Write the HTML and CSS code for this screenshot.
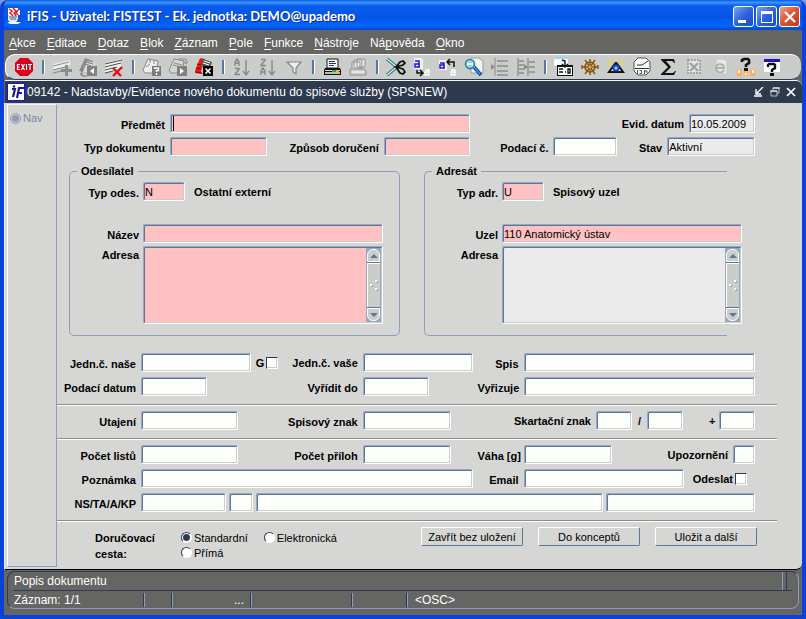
FILE: index.html
```html
<!DOCTYPE html>
<html lang="cs">
<head>
    <meta charset="UTF-8">
    <meta name="viewport" content="width=device-width, initial-scale=1.0">
    <title>iFIS</title>
    <link rel="stylesheet" href="styles.css">
</head>
<body>
    <div class="window">
        <header class="titlebar">
            <svg class="app-icon" width="16" height="18" viewBox="0 0 16 18">
                <path d="M2 1h10v2h2v5h-2v3H4L2 8z" fill="#fff"/>
                <path d="M3 2l3 2-2 2 3 3M7 1l3 3-2 2 2 3M12 3l-2 3 2 2" stroke="#d8232f" stroke-width="1.5" fill="none"/>
                <path d="M2 9h10v4l-2 2H4l-2-2z" fill="#e8ecf8"/>
                <path d="M3 10h8M4 12h6M12 10h2v3h-3" stroke="#34509c" fill="none"/>
                <path d="M1 15h14l-3 2H4z" fill="#fff"/>
            </svg>
            <h1>iFIS - Uživatel: FISTEST - Ek. jednotka: DEMO@upademo</h1>
            <div class="window-buttons">
                <button type="button" class="window-button" aria-label="Minimalizovat">
                    <svg width="20" height="20" viewBox="0 0 20 20"><path d="M4 13h8v3H4z" fill="#fff"/></svg>
                </button>
                <button type="button" class="window-button" aria-label="Maximalizovat">
                    <svg width="20" height="20" viewBox="0 0 20 20"><path d="M4 4h12v12H4zM5 7v8h10V7z" fill="#fff" fill-rule="evenodd"/></svg>
                </button>
                <button type="button" class="window-button close" aria-label="Zavřít">
                    <svg width="20" height="20" viewBox="0 0 20 20"><path d="M5 5l10 10M15 5L5 15" stroke="#fff" stroke-width="2.4"/></svg>
                </button>
            </div>
        </header>

        <nav class="menu">
            <button type="button"><u>A</u>kce</button>
            <button type="button"><u>E</u>ditace</button>
            <button type="button"><u>D</u>otaz</button>
            <button type="button"><u>B</u>lok</button>
            <button type="button"><u>Z</u>áznam</button>
            <button type="button"><u>P</u>ole</button>
            <button type="button"><u>F</u>unkce</button>
            <button type="button"><u>N</u>ástroje</button>
            <button type="button">Ná<u>p</u>ověda</button>
            <button type="button"><u>O</u>kno</button>
        </nav>

        <div class="toolbar">
            <button type="button" aria-label="Konec">
                <svg viewBox="0 0 20 20"><path d="M6 1h8l5 5v8l-5 5H6l-5-5V6z" fill="#d9001b"/><path d="M6 7.500H3.500v5H6M3 10h2.500M7.500 7l3 6M10.500 7l-3 6M12.500 7v6M14 7.500h4M16 7v6" stroke="#fff" stroke-width="1.200" fill="none"/></svg>
            </button>
            <span class="separator"></span>
            <button type="button" aria-label="Vložit záznam">
                <svg viewBox="0 0 20 20"><path d="M1 7l17-4v5L1 13z" fill="#efefef"/><path d="M1 9l16-4M1 13l12-3M1 16l9-2" stroke="#8b8b8b" fill="none"/><path d="M13 8h3v4h4v3h-4v4h-3v-4h-4v-3h4z" fill="#8d8d8d"/></svg>
            </button>
            <button type="button" aria-label="Předchozí záznam">
                <svg viewBox="0 0 20 20"><path d="M1 14L7 1l8 3-3 12z" fill="#8d8d8d"/><path d="M9 4l8 2-3 9H5z" fill="#d9d9d9"/><path d="M8 5l7 2M7 7l6 2M4 12v7M2 16l2 3h5" stroke="#777" fill="none"/><path d="M9 9h10v10H9z" fill="#818181"/><path d="M16 11v6l-4-3z" fill="#fff"/></svg>
            </button>
            <button type="button" aria-label="Smazat záznam">
                <svg viewBox="0 0 20 20"><path d="M1 6l16-4v9L1 16z" fill="#f3f3f3"/><path d="M1 7l17-4M1 10l16-4M1 13l12-3M1 16l8-2" stroke="#4a4a4a" fill="none"/><path d="M9 11l8 8M18 10l-9 9" stroke="#e01010" stroke-width="2.400"/></svg>
            </button>
            <span class="separator"></span>
            <button type="button" aria-label="Zadat dotaz">
                <svg viewBox="0 0 20 20"><path d="M1 13L6 2l10 2-2 12H3z" fill="#eee" stroke="#888"/><path d="M8 2v4M12 3v4M4 10l4-3" stroke="#888" fill="none"/><path d="M10 9h9v10h-9z" fill="#7b7b7b"/><path d="M12.500 12v-1h4v2.500h-2V15M14.500 16v2" stroke="#fff" stroke-width="1.400" fill="none"/></svg>
            </button>
            <button type="button" aria-label="Provést dotaz">
                <svg viewBox="0 0 20 20"><path d="M1 13L6 2l10 2-2 12H3z" fill="#d5d5d5" stroke="#888"/><path d="M6 6l8 2M5 8l8 2M10 2h8v3M15 4l3 3 2-3" stroke="#888" fill="none"/><path d="M9 9h10v10H9z" fill="#818181"/><path d="M12 11v6l4-3z" fill="#fff"/></svg>
            </button>
            <button type="button" aria-label="Zrušit dotaz">
                <svg viewBox="0 0 20 20"><path d="M1 14L6 1l5 1-4 12 2 3-8-1z" fill="#e41b17"/><path d="M9 2l9 3-2 6-9-2z" fill="#555"/><path d="M10 4l6 2M9 6l6 2" stroke="#fff"/><path d="M3 7l4 1M2 11l5 1M2 15l5 1" stroke="#8a0000"/><path d="M9 9h10v10H9z" fill="#000"/><path d="M11.500 11.500l5 5M16.500 11.500l-5 5" stroke="#fff" stroke-width="1.600"/></svg>
            </button>
            <span class="separator"></span>
            <button type="button" aria-label="Seřadit vzestupně">
                <svg viewBox="0 0 20 20"><path d="M3 9V5l2-3 2 3v4M3 6h4M3 11.500h4v1L3 17v.500h5M14 3v14M11 14l3 4 3-4" stroke="#858585" stroke-width="1.300" fill="none"/></svg>
            </button>
            <button type="button" aria-label="Seřadit sestupně">
                <svg viewBox="0 0 20 20"><path d="M3 2.500h4v1L3 8v.500h5M3 18v-4l2-3 2 3v4M3 15h4M14 3v14M11 14l3 4 3-4" stroke="#858585" stroke-width="1.300" fill="none"/></svg>
            </button>
            <button type="button" aria-label="Filtr">
                <svg viewBox="0 0 20 20"><path d="M3 5h14l-5 6v6l-3-2v-4z" fill="#ededed" stroke="#858585" stroke-width="1.200"/></svg>
            </button>
            <span class="separator"></span>
            <button type="button" aria-label="Tisk">
                <svg viewBox="0 0 20 20"><path d="M5 2h11v9H5z" fill="#fff" stroke="#111"/><path d="M7 4.500h6M7 6.500h7M7 8.500h5" stroke="#1b3196"/><path d="M3 11h15l1 2v5H2v-5z" fill="#111"/><path d="M3 13h15v1H3z" fill="#ddd"/><path d="M3 15h15v2H3z" fill="#bbb"/><path d="M10 13h4v2h-4z" fill="#23b52b"/><path d="M14 13h3v2h-3z" fill="#e9c600"/></svg>
            </button>
            <button type="button" aria-label="Tisk všeho">
                <svg viewBox="0 0 20 20"><path d="M9 2h8v8H9zM6 3h8v8H6zM4 5h8v8H4z" fill="#eee" stroke="#909090"/><path d="M2 12h14l2 2v4H2z" fill="#ccc" stroke="#909090"/><path d="M4 15h12" stroke="#fff"/></svg>
            </button>
            <span class="separator"></span>
            <button type="button" aria-label="Vyjmout">
                <svg viewBox="0 0 20 20"><path d="M1 2l11 9M1 18l11-9" stroke="#33656d" stroke-width="3.200"/><path d="M1 2l11 9M1 18l11-9" stroke="#c8f4f4" stroke-width="1.500"/><path d="M10 10l4-5 3-1 2 2-2 2-7 2 7 2 2 3-2 2-3-1z" stroke="#111" stroke-width="1.800" fill="none"/></svg>
            </button>
            <button type="button" aria-label="Kopírovat">
                <svg viewBox="0 0 20 20"><path d="M2 1h7l2 2v9H2z" fill="#f4f4f4"/><path d="M3 4h4v6H3V7h4M7 10h1" stroke="#1717d8" stroke-width="1.500" fill="none"/><path d="M5 13v3h6M8 13l3 3-3 3" stroke="#111" stroke-width="1.500" fill="none"/><path d="M13 13h4v5h-4v-3h4" stroke="#fff" stroke-width="1.300" fill="none"/></svg>
            </button>
            <button type="button" aria-label="Vložit">
                <svg viewBox="0 0 20 20"><path d="M1 3h7l1 2v8H1z" fill="#f4f4f4"/><path d="M2 6h4v5H2V8h4M6 11h1" stroke="#1717d8" stroke-width="1.500" fill="none"/><path d="M10 5h6v5M12 2L9 5l3 3" stroke="#111" stroke-width="1.500" fill="none"/><path d="M13 13h4v5h-4v-3h4" stroke="#fff" stroke-width="1.300" fill="none"/></svg>
            </button>
            <button type="button" aria-label="Upravit">
                <svg viewBox="0 0 20 20"><path d="M7 1h8l4 3v12H7z" fill="#f4f4ee" stroke="#999"/><circle cx="6" cy="7" r="4.500" fill="#8fdce8" stroke="#297f99" stroke-width="1.500"/><path d="M3 7h6" stroke="#fff" stroke-width="2"/><path d="M10 10l7 8" stroke="#1452b8" stroke-width="3.500"/><path d="M10 10l6 7" stroke="#55c7ee"/></svg>
            </button>
            <button type="button" aria-label="Seznam hodnot">
                <svg viewBox="0 0 20 20"><path d="M5 1v18" stroke="#8a8a8a"/><path d="M1 7l4 3-4 3z" fill="#8a8a8a"/><path d="M7 4h11M7 9h11M7 14h11M7 18h11" stroke="#8a8a8a" stroke-width="1.500"/></svg>
            </button>
            <button type="button" aria-label="Strom">
                <svg viewBox="0 0 20 20"><path d="M2 1v18M12 1v18" stroke="#8a8a8a" stroke-width="1.300"/><path d="M3 4h5M3 8h5M3 12h5M3 16h5M13 5h6M13 10h6M13 15h6" stroke="#8a8a8a" stroke-width="1.500"/><path d="M8 7l4 3-4 3z" fill="#8a8a8a"/></svg>
            </button>
            <span class="separator"></span>
            <button type="button" aria-label="Detail">
                <svg viewBox="0 0 20 20"><path d="M0 1h14v8H0z" fill="#f4fbff"/><path d="M0 1h14" stroke="#9cd5f5" stroke-width="2"/><path d="M3 8h16v11H3z" fill="#111"/><path d="M4 10h14v8H4z" fill="#fff"/><path d="M5 12h4M5 15h4M11 15h1M14 12h2v4h-2zM8 3l3 1v5M8 7l3 3 3-3" stroke="#111" stroke-width="1.400" fill="none"/></svg>
            </button>
            <button type="button" aria-label="Navigátor">
                <svg viewBox="0 0 20 20"><circle cx="10" cy="10" r="5" fill="none" stroke="#8b5508" stroke-width="1.600"/><path d="M2 10h16M10 2v16M5 3l10 14M15 3L5 17M2 8v4M18 8v4" stroke="#8b5508" stroke-width="1.400"/><circle cx="10" cy="10" r="1.500" fill="#dfb15c"/></svg>
            </button>
            <button type="button" aria-label="Zobrazit">
                <svg viewBox="0 0 20 20"><path d="M2 5l3 3M6 2l1 3M14 2l-1 3M18 5l-3 3" stroke="#eadf21" stroke-width="1.500"/><path d="M1 16L9 5h2l8 11z" fill="#111"/><path d="M5 14l4-5h2l4 5z" fill="#f4f4f4"/><circle cx="10" cy="11" r="3.500" fill="#1d45d6"/><circle cx="10" cy="11" r="1.500" fill="#6eeaf7"/></svg>
            </button>
            <button type="button" aria-label="Kalendář">
                <svg viewBox="0 0 20 20"><path d="M6 1h8l4 4v9l-4 4H6l-4-4V5z" fill="#fafafa" stroke="#555"/><path d="M5 8h5l6-4M3 11.500h14" stroke="#333" fill="none"/><path d="M5.500 13v4M7.500 13.500h2v3h-2M12.500 13v4M14 13v2h2" stroke="#555" fill="none"/></svg>
            </button>
            <button type="button" aria-label="Součet">
                <svg viewBox="0 0 20 20"><path d="M3 2h13l1 4h-1c-1-2-2-2-3-2H8l5 6-6 6h7c2 0 2-1 3-2h1l-2 4H3v-1l7-7-7-7z" fill="#111"/></svg>
            </button>
            <button type="button" aria-label="Export do Excelu">
                <svg viewBox="0 0 20 20"><path d="M4 3h12v13H4z" fill="#e3e3e3" stroke="#a5a5a5" stroke-width="2" stroke-dasharray="2 1"/><path d="M6 6l8 8M14 6l-8 8" stroke="#a0a0a0" stroke-width="2"/></svg>
            </button>
            <button type="button" aria-label="Export do prohlížeče">
                <svg viewBox="0 0 20 20"><path d="M6 2h8l3 3v12H6z" fill="#e8e8e8" stroke="#c4c4c4"/><path d="M14 13c-2 4-8 3-8-2s8-5 8 0H6" fill="none" stroke="#b0b0b0" stroke-width="2"/></svg>
            </button>
            <button type="button" aria-label="Kontextová nápověda">
                <svg viewBox="0 0 20 20"><path d="M1 12h5v7H1zM8 14h4v5H8zM14 12h5v7h-5z" fill="#f6b45c"/><path d="M2 13h2v3H2zM9 16h2v2H9zM16 13h2v3h-2z" fill="#fff0cf"/><path d="M6 5V3l2-1h4l1 1v3l-3 2v2" stroke="#111" stroke-width="2.600" fill="none"/><path d="M8 11h4v3H8z" fill="#111"/></svg>
            </button>
            <button type="button" aria-label="Nápověda">
                <svg viewBox="0 0 20 20"><path d="M2 3h16v12H2z" fill="#fff"/><path d="M2 2h16v3H2z" fill="#2411c8"/><path d="M6 10V8l1-1h5l1 1v3l-3 2v2" stroke="#111" stroke-width="2.400" fill="none"/><path d="M8 16h4v3H8z" fill="#111"/></svg>
            </button>
        </div>

        <div class="form-title">
            <svg width="18" height="18" viewBox="0 0 18 18">
                <path d="M0 0h18v18H0z" fill="#1414f0"/>
                <path d="M1 1h16v16H1z" fill="#fff"/>
                <path d="M6 4l2-1M5 6h3L6 14M10 15l2-10h5M10 10h5" stroke="#1a1a8c" stroke-width="2.200" fill="none"/>
            </svg>
            <h2>09142 - Nadstavby/Evidence nového dokumentu do spisové služby (SPSNEW)</h2>
            <div class="form-buttons">
                <button type="button" aria-label="Minimalizovat formulář">
                    <svg width="10" height="10" viewBox="0 0 10 10"><path d="M9 0L3 6M2 2v5h5M0 9h8" stroke="#fff" stroke-width="1.400" fill="none"/></svg>
                </button>
                <button type="button" aria-label="Obnovit formulář">
                    <svg width="10" height="10" viewBox="0 0 10 10"><path d="M3 3V1h6v5H7M1 4h6v5H1z" stroke="#b9bfca" fill="none"/><path d="M3 1h7M0 4h7" stroke="#fff"/></svg>
                </button>
                <button type="button" aria-label="Zavřít formulář">
                    <svg width="10" height="10" viewBox="0 0 10 10"><path d="M1 1l8 8M9 1L1 9" stroke="#fff" stroke-width="1.700"/></svg>
                </button>
            </div>
        </div>

        <main class="workspace">
            <aside class="nav-panel">
                <label><input type="radio" name="nav" class="nav-radio" disabled> Nav</label>
            </aside>

            <form class="form">
                <div class="head-grid">
                    <label for="predmet">Předmět</label>
                    <input type="text" id="predmet" class="required current span-3">
                    <div class="cell-end head-date">
                        <label for="datum">Evid. datum</label>
                        <input type="text" id="datum" class="w-date" value="10.05.2009" readonly>
                    </div>
                    <label for="typ">Typ dokumentu</label>
                    <input type="text" id="typ" class="required">
                    <label for="zpusob">Způsob doručení</label>
                    <input type="text" id="zpusob" class="required">
                    <label for="podaci">Podací č.</label>
                    <input type="text" id="podaci">
                    <label for="stav">Stav</label>
                    <input type="text" id="stav" value="Aktivní" readonly>
                </div>

                <div class="groups">
                    <fieldset class="group">
                        <legend>Odesílatel</legend>
                        <div class="group-grid">
                            <label for="typ-odes">Typ odes.</label>
                            <div class="cell">
                                <input type="text" id="typ-odes" class="required w-type" value="N">
                                <output>Ostatní externí</output>
                            </div>
                            <label for="nazev" class="gap-before">Název</label>
                            <input type="text" id="nazev" class="required gap-before">
                            <label for="adresa-odes" class="top">Adresa</label>
                            <div class="area required">
                                <textarea id="adresa-odes"></textarea>
                                <div class="scrollbar">
                                    <button type="button" class="up" aria-label="Nahoru"></button>
                                    <span class="thumb"><svg width="8" height="12" viewBox="0 0 8 12"><path d="M5 1h2v2H5zM0 5h2v2H0zM5 9h2v2H5z" fill="#fff"/><path d="M7 2h1v2H6V3h1zM2 6h1v2H1V7h1zM7 10h1v2H6v-1h1z" fill="#9aa7bb"/></svg></span>
                                    <button type="button" class="down" aria-label="Dolů"></button>
                                </div>
                            </div>
                        </div>
                    </fieldset>

                    <fieldset class="group open">
                        <legend>Adresát</legend>
                        <div class="group-grid">
                            <label for="typ-adr">Typ adr.</label>
                            <div class="cell">
                                <input type="text" id="typ-adr" class="required w-type" value="U">
                                <output>Spisový uzel</output>
                            </div>
                            <label for="uzel" class="gap-before">Uzel</label>
                            <input type="text" id="uzel" class="required gap-before" value="110 Anatomický ústav">
                            <label for="adresa-adr" class="top">Adresa</label>
                            <div class="area">
                                <textarea id="adresa-adr" readonly></textarea>
                                <div class="scrollbar">
                                    <button type="button" class="up" aria-label="Nahoru"></button>
                                    <span class="thumb"><svg width="8" height="12" viewBox="0 0 8 12"><path d="M5 1h2v2H5zM0 5h2v2H0zM5 9h2v2H5z" fill="#fff"/><path d="M7 2h1v2H6V3h1zM2 6h1v2H1V7h1zM7 10h1v2H6v-1h1z" fill="#9aa7bb"/></svg></span>
                                    <button type="button" class="down" aria-label="Dolů"></button>
                                </div>
                            </div>
                        </div>
                    </fieldset>
                </div>

                <div class="detail-grid">
                    <label for="nase">Jedn.č. naše</label>
                    <input type="text" id="nase">
                    <div class="cell-between">
                        <label>G<input type="checkbox"></label>
                        <label for="vase">Jedn.č. vaše</label>
                    </div>
                    <input type="text" id="vase">
                    <label for="spis">Spis</label>
                    <input type="text" id="spis">

                    <label for="podaci-datum">Podací datum</label>
                    <input type="text" id="podaci-datum" class="w-date">
                    <label for="vyridit">Vyřídit do</label>
                    <input type="text" id="vyridit" class="w-date">
                    <label for="vyrizuje">Vyřizuje</label>
                    <input type="text" id="vyrizuje">
                </div>

                <hr>

                <div class="detail-grid">
                    <label for="utajeni">Utajení</label>
                    <input type="text" id="utajeni" class="w-code">
                    <label for="znak">Spisový znak</label>
                    <input type="text" id="znak" class="w-number">
                    <div class="cell-end span-2 shredding">
                        <label for="skart">Skartační znak</label>
                        <input type="text" id="skart" class="w-short">
                        <span class="mark">/</span>
                        <input type="text" class="w-short" aria-label="Skartační lhůta">
                        <span class="mark plus">+</span>
                        <input type="text" class="w-short" aria-label="Prodloužení">
                    </div>
                </div>

                <hr>

                <div class="detail-grid">
                    <label for="listu">Počet listů</label>
                    <input type="text" id="listu" class="w-code">
                    <label for="priloh">Počet příloh</label>
                    <input type="text" id="priloh" class="w-number">
                    <label for="vaha">Váha [g]</label>
                    <div class="cell-between">
                        <input type="text" id="vaha" class="w-number">
                        <span class="cell-end">
                            <label for="upozorneni">Upozornění</label>
                            <input type="text" id="upozorneni" class="w-flag">
                        </span>
                    </div>

                    <label for="poznamka">Poznámka</label>
                    <input type="text" id="poznamka" class="span-3">
                    <label for="email">Email</label>
                    <div class="cell-between send">
                        <input type="text" id="email" class="grow">
                        <label>Odeslat<input type="checkbox"></label>
                    </div>

                    <label for="ns">NS/TA/A/KP</label>
                    <div class="accounts">
                        <input type="text" id="ns">
                        <input type="text" aria-label="TA">
                        <input type="text" aria-label="A">
                        <input type="text" aria-label="KP">
                    </div>
                </div>

                <hr>

                <div class="footer">
                    <div class="delivery" role="radiogroup" aria-labelledby="cesta">
                        <strong id="cesta">Doručovací cesta:</strong>
                        <div class="choices">
                            <label><input type="radio" name="cesta" checked>Standardní</label>
                            <label><input type="radio" name="cesta">Přímá</label>
                        </div>
                        <label><input type="radio" name="cesta">Elektronická</label>
                    </div>
                    <div class="actions">
                        <button type="button">Zavřít bez uložení</button>
                        <button type="button">Do konceptů</button>
                        <button type="button">Uložit a další</button>
                    </div>
                </div>
            </form>
        </main>

        <footer class="status">
            <div class="status-hint">Popis dokumentu</div>
            <div class="status-row">
                <span>Záznam: 1/1</span>
                <span></span>
                <span class="dots">...</span>
                <span></span>
                <span></span>
                <span>&lt;OSC&gt;</span>
            </div>
        </footer>
    </div>
</body>
</html>
```

FILE: styles.css
```css
* {
    margin: 0;
    padding: 0;
    box-sizing: border-box;
}

body {
    background: #7a96df;
    font-family: "Liberation Sans", Arial, sans-serif;
    font-size: 11px;
    color: #000;
}

button, input, textarea {
    font: inherit;
    color: inherit;
}

button {
    border: none;
    background: none;
}

svg {
    display: block;
}

.window {
    min-height: 100vh;
    display: flex;
    flex-direction: column;
    background: #656664;
    border: solid #0842d8;
    border-width: 0 4px 4px;
    border-radius: 8px 8px 0 0;
    overflow: hidden;
}

/* Title bar */
.titlebar {
    height: 30px;
    margin: 0 -4px;
    padding: 2px 6px 0;
    display: flex;
    align-items: center;
    gap: 5px;
    background: linear-gradient(#0a5be0, #3a94ff 8%, #0a5ceb 20%, #0355e6 60%, #0466ff 85%, #0347cf);
    color: #fff;
}

.titlebar h1 {
    flex: 1;
    font-family: Lato, "Trebuchet MS", sans-serif;
    font-size: 13px;
    font-weight: bold;
    text-shadow: 1px 1px #0a2f8c;
}

.window-buttons {
    display: flex;
    gap: 2px;
}

.window-button {
    width: 21px;
    height: 21px;
    border: 1px solid #fff;
    border-radius: 3px;
    background: linear-gradient(135deg, #7ba3f0, #2f62dc 50%, #1c4bc8);
}

.window-button.close {
    background: linear-gradient(135deg, #f0a088, #dc5030 50%, #c43a18);
}

/* Menu */
.menu {
    height: 24px;
    padding: 2px 5px 0;
    display: flex;
    align-items: center;
    gap: 11px;
    font-size: 12px;
    color: #fff;
}

.menu u {
    text-underline-offset: 2px;
}

/* Toolbar */
.toolbar {
    height: 26px;
    margin: 0 1px;
    padding: 0 8px;
    display: flex;
    align-items: center;
    gap: 6px;
    background: #cbcdcb;
    border-top: 1px solid #fff;
    border-left: 1px solid #fff;
    border-bottom: 1px solid #2f3b50;
    border-radius: 10px;
}

.toolbar button, .toolbar svg {
    width: 20px;
    height: 20px;
}

.separator {
    width: 6px;
    height: 14px;
    display: flex;
    justify-content: center;
}

.separator::before {
    content: "";
    width: 2px;
    background: #5b76a5;
    border-right: 1px solid #fff;
}

/* Form title */
.form-title {
    height: 23px;
    margin-left: 1px;
    padding: 0 6px 0 2px;
    display: flex;
    align-items: center;
    gap: 2px;
    background: #2f3a4e;
    border-top: 1px solid #f4f4f4;
    border-radius: 0 6px 0 0;
    color: #fff;
}

.form-title h2 {
    flex: 1;
    font-size: 12px;
    font-weight: normal;
}

.form-buttons {
    display: flex;
    gap: 6px;
}

/* Workspace */
.workspace {
    flex: 1;
    display: flex;
    background: #d6d6d5;
    border-left: 1px solid #eee;
    border-bottom: 1px solid #000;
    border-radius: 0 0 6px 0;
}

.nav-panel {
    width: 50px;
    margin: 1px 0 2px 2px;
    padding: 7px 2px;
    border: 1px solid #8e9dba;
    border-left-color: #fff;
    border-top-color: #f4f4f4;
    color: #7b88a0;
}

.nav-panel label {
    display: flex;
    align-items: center;
    gap: 2px;
}

.form {
    flex: 1;
    padding-top: 11px;
}

label, legend, output, .mark, .delivery strong {
    font-weight: bold;
    white-space: nowrap;
}

.nav-panel label, .delivery label {
    font-weight: normal;
}

/* Fields */
input[type="text"] {
    width: 100%;
    min-width: 0;
    height: 19px;
    padding: 0 1px;
    background: #fdfffd;
    border: 1px solid #98a8be;
    border-right-color: #fff;
    border-bottom-color: #fff;
    border-radius: 2px;
    box-shadow: inset 1px 1px #5c7699, inset -1px -1px #cacdca;
    outline: none;
}

input[type="text"].required, .area.required {
    background: #ffc1c1;
}

/* Field that holds the cursor */
input[type="text"].current {
    background: linear-gradient(#000, #000) 2px 1px / 1px 15px no-repeat #ffc1c1;
}

input[type="text"]:read-only {
    background: #ebebeb;
}

input[type="text"].w-date { width: 66px; }
input[type="text"].w-type { width: 42px; }
input[type="text"].w-code { width: 97px; }
input[type="text"].w-number { width: 88px; }
input[type="text"].w-short { width: 36px; }
input[type="text"].w-flag { width: 22px; }

input[type="checkbox"] {
    appearance: none;
    width: 12px;
    height: 12px;
    background: #fdfffd;
    border: 1px solid #2f3b50;
    border-right-color: #fff;
    border-bottom-color: #fff;
    box-shadow: inset -1px -1px #cacdca;
}

input[type="radio"] {
    appearance: none;
    width: 11px;
    height: 11px;
    background: #fdfffd;
    border: 1px solid #2f3b50;
    border-right-color: #fff;
    border-bottom-color: #fff;
    border-radius: 50%;
}

input[type="radio"]:checked {
    background: radial-gradient(circle, #2f3b50 3px, #fdfffd 4px);
}

input[type="radio"].nav-radio {
    background: radial-gradient(circle, #8c9db4 3px, #c8ccd2 4px);
    border-color: #8c9db4;
}

.head-grid {
    display: grid;
    grid-template-columns: 108px 97fr 107px 87fr 73px 64fr 40px 88fr;
    gap: 4px 5px;
    align-items: center;
    padding-right: 47px;
}

.head-grid > label, .detail-grid > label, .group-grid > label {
    text-align: right;
    padding-top: 3px;
}

.span-2 { grid-column: span 2; }
.span-3 { grid-column: span 3; }

.head-date {
    grid-column: 5 / -1;
}

.cell, .cell-end, .cell-between {
    display: flex;
    align-items: center;
    gap: 5px;
}

.cell-end { justify-content: flex-end; }
.cell-between { justify-content: space-between; }

.cell-between label {
    display: flex;
    align-items: center;
    gap: 2px;
}

/* Sender and addressee */
.groups {
    display: grid;
    grid-template-columns: 331fr 303fr;
    gap: 24px;
    margin: 7px 75px 17px 12px;
}

.group {
    min-width: 0;
    padding: 3px 16px 11px 0;
    border: 1px solid #8e9dba;
    border-radius: 5px;
}

.group legend {
    margin-left: 7px;
    padding: 0 4px;
    line-height: 16px;
}

.group.open {
    border-right: none;
    border-radius: 5px 0 0 5px;
    padding-right: 0;
}

.group-grid {
    display: grid;
    grid-template-columns: 69px 1fr;
    gap: 3px 4px;
    align-items: center;
}

/* The fields run past the open side of the frame */
.open .group-grid {
    grid-template-columns: 73px 1fr;
    margin-right: -15px;
}

.cell output {
    margin-left: 4px;
}

.gap-before {
    margin-top: 20px;
}

.group-grid .top {
    align-self: start;
}

.area {
    height: 78px;
    display: flex;
    padding: 1px;
    background: #ebebeb;
    border: 1px solid #98a8be;
    border-right-color: #fff;
    border-bottom-color: #fff;
    border-radius: 2px;
    box-shadow: inset 1px 1px #5c7699, inset -1px -1px #cacdca;
}

.area textarea {
    flex: 1;
    min-width: 0;
    border: none;
    outline: none;
    resize: none;
    background: transparent;
}

.scrollbar {
    width: 15px;
    display: flex;
    flex-direction: column;
    background: #98a8be;
    padding: 1px;
}

.scrollbar button {
    height: 13px;
    background: #cbcdcb;
    border: 1px solid #fff;
    border-radius: 6px 6px 0 0;
    display: flex;
    align-items: center;
    justify-content: center;
}

.scrollbar .down {
    border-radius: 0 0 6px 6px;
}

.scrollbar button::before {
    content: "";
    border: 4px solid transparent;
    border-top-width: 0;
    border-bottom-color: #5c7699;
}

.scrollbar .down::before {
    border-width: 4px 4px 0;
    border-top-color: #5c7699;
}

.thumb {
    flex: 1;
    display: flex;
    align-items: center;
    justify-content: center;
    background: #cbcdcb;
    border: solid #5c7699;
    border-width: 1px 0;
    box-shadow: inset 1px 1px #fff;
}

/* Document details */
.detail-grid {
    display: grid;
    grid-template-columns: 79px 110fr 102px 110fr 41px 232fr;
    gap: 5px;
    align-items: center;
    padding-right: 47px;
}

.detail-grid .grow {
    flex: 1;
}

.send {
    padding-right: 8px;
}

.send label {
    padding-left: 4px;
}

.shredding .mark {
    width: 5px;
    text-align: center;
}

.shredding .plus {
    margin-left: 21px;
}

.accounts {
    grid-column: 2 / -1;
    display: grid;
    grid-template-columns: 85px 24px 348fr 150fr;
    gap: 3px;
}

hr {
    height: 2px;
    margin: 8px 25px 5px 0;
    border: none;
    border-top: 1px solid #8c8c8a;
    background: #fff;
}

/* Delivery and actions */
.footer {
    display: flex;
    justify-content: space-between;
    align-items: flex-start;
    padding: 0 45px 0 38px;
}

.delivery {
    display: flex;
    gap: 16px;
    padding-top: 3px;
}

.delivery strong {
    width: 70px;
    line-height: 16px;
    white-space: normal;
}

.delivery label {
    height: 15px;
    display: flex;
    align-items: center;
    gap: 2px;
}

.actions {
    display: flex;
    gap: 15px;
}

.actions button {
    width: 102px;
    height: 19px;
    background: #d6d6d5;
    border: 1px solid #fff;
    border-right-color: #5c7699;
    border-bottom-color: #5c7699;
    border-radius: 2px;
}

/* Status bar */
.status {
    margin: 1px 3px 6px;
    border: 1px solid #8e9dba;
    border-top-color: #2f3b50;
    border-left-color: #2f3b50;
    border-radius: 8px;
    padding: 0 6px;
    font-size: 12px;
    line-height: 18px;
    color: #fff;
}

.status-hint {
    padding-right: 5px;
    border-bottom: 1px solid #2f3b50;
}

.status-hint::after {
    content: "";
    float: right;
    width: 3px;
    height: 18px;
    border: solid #8e9dba;
    border-width: 0 1px;
    border-right-color: #2f3b50;
}

.status-row {
    display: grid;
    grid-template-columns: 131px 28px 79px 101px 55px 1fr;
}

.status-row span {
    height: 14px;
    margin: 2px 0 1px;
    line-height: 14px;
    border-right: 1px solid #8e9dba;
    box-shadow: inset -1px 0 #2f3b50;
}

.status-row span:last-child {
    padding-left: 7px;
    border: none;
    box-shadow: none;
}

.status-row .dots {
    padding-right: 7px;
    text-align: right;
}
```
